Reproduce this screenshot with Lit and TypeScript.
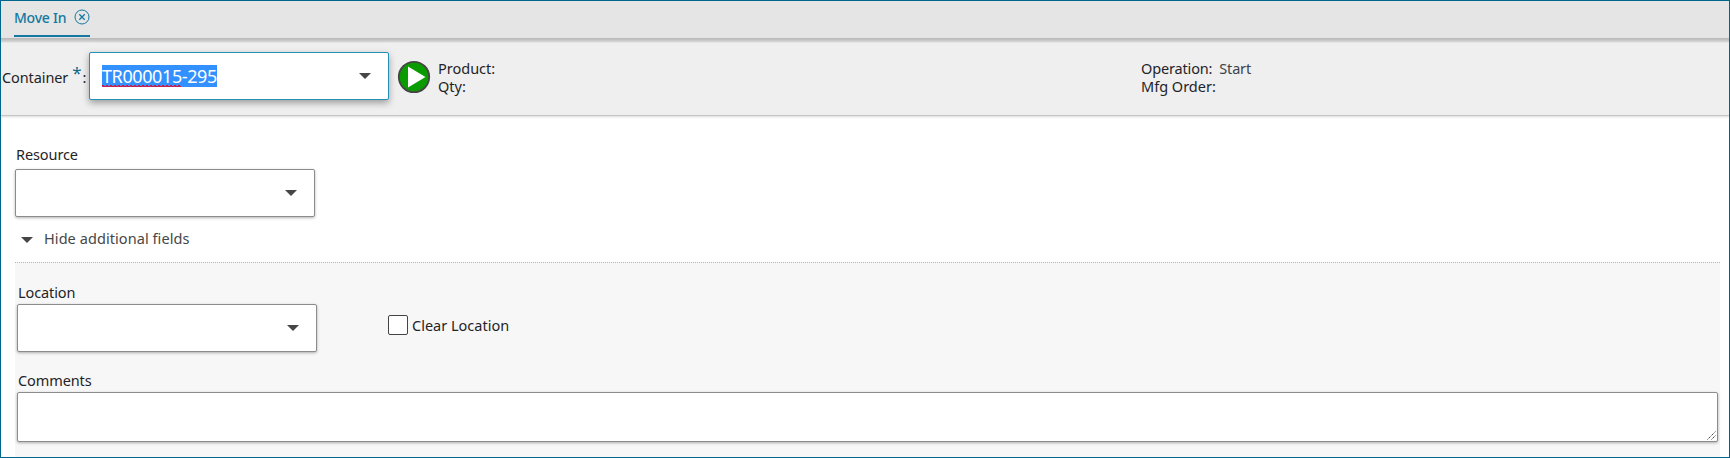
import { LitElement, html, css } from "lit";
import { customElement, property } from "lit/decorators.js";

@customElement("combo-box")
class ComboBox extends LitElement {
  @property() value = "";
  @property({ type: Boolean }) active = false;
  static styles = css`
    :host { display: block; width: 300px; height: 48px; flex: none; }
    .box { box-sizing: border-box; height: 48px; display: flex; align-items: center; justify-content: space-between;
      padding: 0 17px 0 12px; background: #fff; border: 1px solid #8c8c8c; border-radius: 2px; box-shadow: 0 1px 3px rgba(0,0,0,.3); }
    .active { border-color: #2490b5; box-shadow: 0 3px 7px rgba(0,0,0,.35); }
    .value { font: 18px/22px "Noto Sans", sans-serif; letter-spacing: -0.4px; color: #fff; }
    .sel { display: inline-block; background: #3390ff; height: 22px; white-space: nowrap; }
    .bad { display: inline-block; height: 22px; background:
      repeating-linear-gradient(90deg, #e8152a 0 2px, transparent 2px 4px) 0 20px / 79px 1px no-repeat,
      repeating-linear-gradient(90deg, #a13a90 0 1px, #e8152a 1px 4px) 0 21px / 79px 1px no-repeat; }
    svg { display: block; margin-top: -1px; }
  `;
  render() {
    const [head, tail] = this.value.split("-");
    return html`<div class="box ${this.active ? "active" : ""}">
      <span class="value">${this.value ? html`<span class="sel"><span class="bad">${head}</span>-${tail}</span>` : ""}</span>
      <svg width="12" height="6" viewBox="0 0 12 6"><path d="M0 0h12L6 6z" fill="#464646"/></svg>
    </div>`;
  }
}

@customElement("app-root")
class AppRoot extends LitElement {
  static styles = css`
    :host { display: block; font: 14.5px/18px "Noto Sans", sans-serif; color: #1e2428; }
    * { box-sizing: border-box; }
    .frame { height: 458px; border: 1px solid #00658a; background: #fff; overflow: hidden; }
    svg { display: block; flex: none; }
    .tabs { height: 37px; background: #e5e5e5; padding-left: 13px; display: flex; }
    .tab { width: 76px; height: 36px; border-bottom: 2px solid #1478a0; display: flex; justify-content: space-between; color: #1478a0; }
    .tab-name { font: 500 14px/34px "Noto Sans", sans-serif; letter-spacing: -0.25px; white-space: nowrap; }
    .tab svg { margin-top: 8px; }
    .header { height: 78px; border-bottom: 1px solid #c6c6c6; display: flex; box-shadow: 0 1px 2px rgba(0,0,0,.15);
      background: linear-gradient(#b9b9b9 0, #c4c4c4 2px, #dadada 4px, #efefef 5px); }
    .req { width: 87px; flex: none; padding: 30px 0 0 1px; display: flex; white-space: pre; letter-spacing: -0.1px; }
    .star { color: #12678a; font-size: 17px; line-height: 10px; margin: 0 1px 0 4px; }
    .header combo-box { margin-top: 14px; margin-left: 1px; }
    .go { margin: 22px 0 0 8px; }
    .facts { padding-top: 21px; width: 703px; flex: none; margin-left: 7px; }
    .facts.second { margin-left: 0; width: auto; }
    .tight { letter-spacing: -0.15px; }
    .plain { color: #3c4248; margin-left: 7px; letter-spacing: -0.2px; }
    .body { padding: 0 9px 0 14px; }
    .resource { padding-top: 29px; }
    .lab { display: block; height: 18px; letter-spacing: -0.1px; }
    .resource .lab { height: 24px; margin-left: 1px; }
    .toggle { height: 45px; display: flex; align-items: center; padding: 0 0 3px 6px; gap: 11px; color: #464646; letter-spacing: 0.07px; }
    .toggle svg { margin-top: 3px; }
    .more { height: 200px; background: repeating-linear-gradient(90deg, #b5b5b5 0 1px, #f7f7f7 1px 2px) 0 0 / 100% 1px no-repeat #f7f7f7; padding: 21px 2px 0 2px; }
    .row { display: flex; }
    .more .lab { margin-left: 1px; height: 21px; }
    .check { display: flex; gap: 4px; margin: 32px 0 0 71px; height: 20px; line-height: 20px; }
    .tick { width: 20px; height: 20px; background: #fff; border: 1px solid #444; border-radius: 2px; }
    .comments { margin-top: 19px; }
    .area { height: 50px; background: #fff; border: 1px solid #8c8c8c; border-radius: 2px; box-shadow: 0 1px 3px rgba(0,0,0,.3);
      display: flex; justify-content: flex-end; align-items: flex-end; padding: 0 1px 1px 0; }
  `;
  render() {
    return html`<div class="frame">
      <div class="tabs"><div class="tab"><span class="tab-name">Move In</span>
        <svg width="16" height="16" viewBox="0 0 16 16" fill="none" stroke="#1478a0"><circle cx="8" cy="8" r="7"/><path d="M5.3 5.3l5.4 5.4M10.7 5.3l-5.4 5.4" stroke-width="1.3"/></svg>
      </div></div>
      <div class="header">
        <div class="req"><span>Container</span><span class="star">*</span><span>:</span></div>
        <combo-box active value="TR000015-295"></combo-box>
        <svg class="go" width="34" height="34" viewBox="0 0 34 34"><circle cx="17" cy="17" r="15.2" fill="#0a9b00" stroke="#464646" stroke-width="1.8"/><path d="M11 6.5v21L28.5 17z" fill="#fff"/></svg>
        <div class="facts"><div>Product:</div><div>Qty:</div></div>
        <div class="facts second"><div><span class="tight">Operation:</span><span class="plain">Start</span></div><div>Mfg Order:</div></div>
      </div>
      <div class="body">
        <div class="resource"><span class="lab">Resource</span><combo-box></combo-box></div>
        <div class="toggle"><svg width="12" height="6" viewBox="0 0 12 6"><path d="M0 0h12L6 6z" fill="#464646"/></svg><span>Hide additional fields</span></div>
        <div class="more">
          <div class="row">
            <div><span class="lab">Location</span><combo-box></combo-box></div>
            <div class="check"><span class="tick"></span><span>Clear Location</span></div>
          </div>
          <div class="comments"><span class="lab">Comments</span>
            <div class="area"><svg width="9" height="9" viewBox="0 0 9 9" fill="none" stroke="#444"><path d="M0.5 8.5l8-8M4.5 8.5l4-4" stroke-dasharray="1.4 .7"/></svg></div>
          </div>
        </div>
      </div>
    </div>`;
  }
}
